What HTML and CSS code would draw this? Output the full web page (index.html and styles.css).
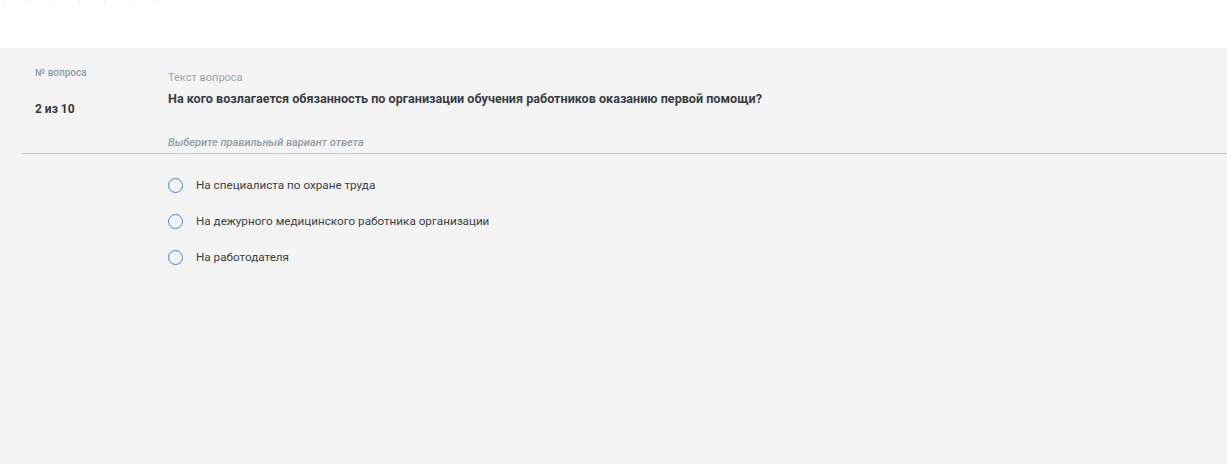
FILE: index.html
```html
<!DOCTYPE html>
<html lang="ru">
<head>
<meta charset="utf-8">
<link rel="stylesheet" href="styles.css">
</head>
<body>
<div class="top">
  <div class="pager">
    <span class="pg">1</span><span class="pg">2</span><span class="pg">3</span><span class="pg">4</span><span class="pg">5</span><span class="pg">6</span><span class="pg">7</span>
  </div>
</div>
<main class="panel">
  <div class="head">
    <div class="left">
      <div class="label-num">№ вопроса</div>
      <div class="num">2 из 10</div>
    </div>
    <div class="right">
      <div class="label-q">Текст вопроса</div>
      <div class="question">На кого возлагается обязанность по организации обучения работников оказанию первой помощи?</div>
      <div class="hint">Выберите правильный вариант ответа</div>
    </div>
  </div>
  <div class="options">
    <label class="opt"><span class="radio"></span><span class="opt-text">На специалиста по охране труда</span></label>
    <label class="opt"><span class="radio"></span><span class="opt-text">На дежурного медицинского работника организации</span></label>
    <label class="opt"><span class="radio"></span><span class="opt-text">На работодателя</span></label>
  </div>
</main>
</body>
</html>
```
FILE: styles.css
```css
* { box-sizing: border-box; }
html, body { margin: 0; padding: 0; }
body {
  font-family: Roboto, "Liberation Sans", Arial, sans-serif;
  background: #f4f4f4;
  color: #3a3f45;
  width: 1227px;
  height: 464px;
  overflow: hidden;
}
.top {
  background: #ffffff;
  height: 48px;
  overflow: hidden;
}
.pager {
  display: flex;
  margin-top: -16px;
  padding-left: 4px;
}
.pg {
  width: 25px;
  height: 20px;
  border-left: 1px solid #f0f2f4;
  font-size: 12px;
  line-height: 20px;
  text-align: center;
  color: #a7b0b8;
}
.panel {
  padding-left: 22px;
}
.head {
  display: flex;
  border-bottom: 1px solid #c5cad0;
  padding-bottom: 3px;
}
.left {
  width: 146px;
  padding-left: 13px;
  padding-top: 19px;
}
.label-num {
  font-size: 10px;
  font-weight: 500;
  color: #8f9ba6;
  line-height: 12px;
}
.num {
  margin-top: 22px;
  font-size: 12px;
  font-weight: 700;
  color: #34383d;
  line-height: 16px;
}
.right {
  padding-top: 23px;
}
.label-q {
  font-size: 11px;
  color: #9aa4ad;
  line-height: 14px;
}
.question {
  margin-top: 6px;
  font-size: 12.6px;
  font-weight: 700;
  color: #383d43;
  line-height: 16px;
}
.hint {
  margin-top: 29px;
  font-size: 11px;
  font-style: italic;
  font-weight: 500;
  color: #929da7;
  line-height: 14px;
}
.options {
  padding-left: 146px;
  padding-top: 23px;
  display: flex;
  flex-direction: column;
  gap: 20px;
}
.opt {
  display: flex;
  align-items: center;
  height: 16px;
}
.radio {
  width: 15px;
  height: 15px;
  border: 1.8px solid #4a86c8;
  border-radius: 50%;
  margin-right: 13px;
  flex: none;
}
.opt-text {
  font-size: 11.7px;
  color: #3a3f45;
  line-height: 16px;
}
```
